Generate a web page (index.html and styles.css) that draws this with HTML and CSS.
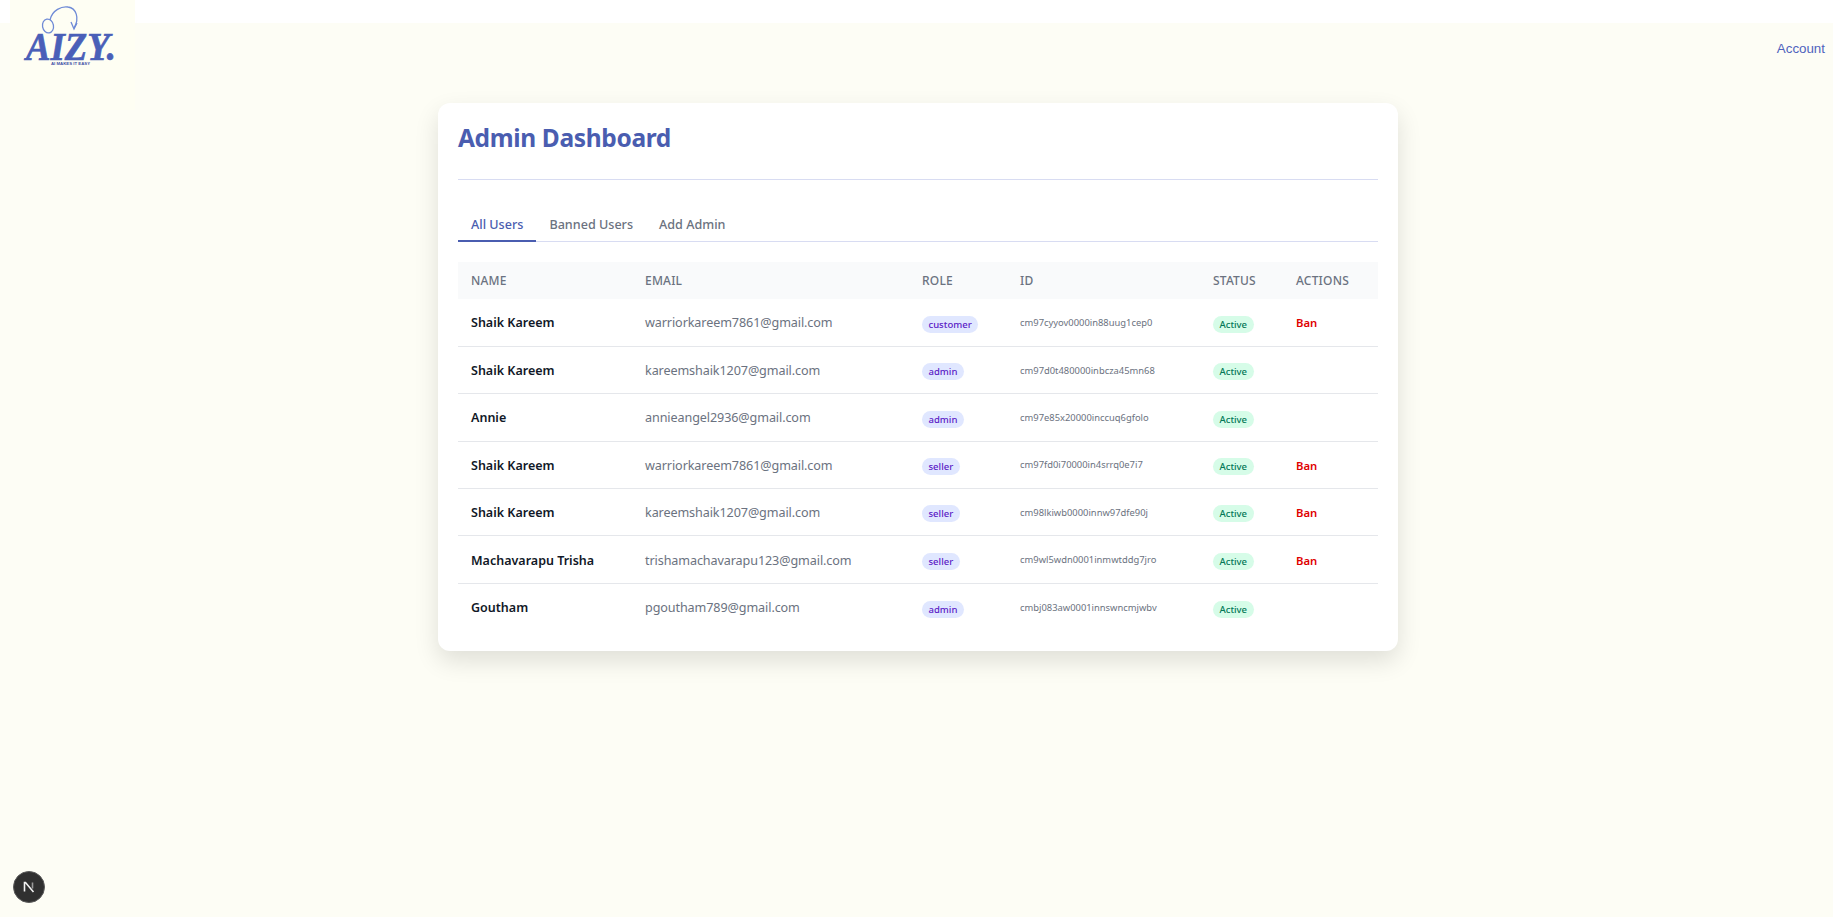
FILE: index.html
```html
<!DOCTYPE html>
<html lang="en">

<head>
    <meta charset="UTF-8">
    <meta name="viewport" content="width=device-width, initial-scale=1.0">
    <title>Admin Dashboard</title>
    <link rel="stylesheet" href="styles.css">
</head>

<body>
    <header class="site-header">
        <div class="logo-box">
            <svg class="logo" width="125" height="70" viewBox="0 0 125 70">
                <ellipse class="logo-loop" cx="38" cy="26" rx="5.5" ry="7" transform="rotate(-10 38 26)" />
                <path class="logo-loop" d="M40 20C42 10 52 6 58 7C66 8 70 18 64 28" />
                <path class="logo-loop" d="M61 22L64 29L67 23" />
                <text class="logo-word" x="16" y="60" textLength="90" lengthAdjust="spacingAndGlyphs">AIZY.</text>
                <text class="logo-tag" x="41" y="65" textLength="39" lengthAdjust="spacingAndGlyphs">AI MAKES IT EASY</text>
            </svg>
        </div>
        <a class="account" href="#">Account</a>
    </header>

    <main class="card">
        <h1>Admin Dashboard</h1>

        <nav class="tabs">
            <a class="tab active" href="#">All Users</a>
            <a class="tab" href="#">Banned Users</a>
            <a class="tab" href="#">Add Admin</a>
        </nav>

        <table class="users">
            <colgroup>
                <col class="col-name">
                <col class="col-email">
                <col class="col-role">
                <col class="col-id">
                <col class="col-status">
                <col class="col-actions">
            </colgroup>
            <thead>
                <tr>
                    <th>Name</th>
                    <th>Email</th>
                    <th>Role</th>
                    <th>ID</th>
                    <th>Status</th>
                    <th>Actions</th>
                </tr>
            </thead>
            <tbody>
                <tr>
                    <td class="name">Shaik Kareem</td>
                    <td class="email">warriorkareem7861@gmail.com</td>
                    <td><span class="pill role">customer</span></td>
                    <td class="uid">cm97cyyov0000in88uug1cep0</td>
                    <td><span class="pill status">Active</span></td>
                    <td><a class="ban" href="#">Ban</a></td>
                </tr>
                <tr>
                    <td class="name">Shaik Kareem</td>
                    <td class="email">kareemshaik1207@gmail.com</td>
                    <td><span class="pill role">admin</span></td>
                    <td class="uid">cm97d0t480000inbcza45mn68</td>
                    <td><span class="pill status">Active</span></td>
                    <td></td>
                </tr>
                <tr>
                    <td class="name">Annie</td>
                    <td class="email">annieangel2936@gmail.com</td>
                    <td><span class="pill role">admin</span></td>
                    <td class="uid">cm97e85x20000inccuq6gfolo</td>
                    <td><span class="pill status">Active</span></td>
                    <td></td>
                </tr>
                <tr>
                    <td class="name">Shaik Kareem</td>
                    <td class="email">warriorkareem7861@gmail.com</td>
                    <td><span class="pill role">seller</span></td>
                    <td class="uid">cm97fd0i70000in4srrq0e7i7</td>
                    <td><span class="pill status">Active</span></td>
                    <td><a class="ban" href="#">Ban</a></td>
                </tr>
                <tr>
                    <td class="name">Shaik Kareem</td>
                    <td class="email">kareemshaik1207@gmail.com</td>
                    <td><span class="pill role">seller</span></td>
                    <td class="uid">cm98lkiwb0000innw97dfe90j</td>
                    <td><span class="pill status">Active</span></td>
                    <td><a class="ban" href="#">Ban</a></td>
                </tr>
                <tr>
                    <td class="name">Machavarapu Trisha</td>
                    <td class="email">trishamachavarapu123@gmail.com</td>
                    <td><span class="pill role">seller</span></td>
                    <td class="uid">cm9wl5wdn0001inmwtddg7jro</td>
                    <td><span class="pill status">Active</span></td>
                    <td><a class="ban" href="#">Ban</a></td>
                </tr>
                <tr>
                    <td class="name">Goutham</td>
                    <td class="email">pgoutham789@gmail.com</td>
                    <td><span class="pill role">admin</span></td>
                    <td class="uid">cmbj083aw0001innswncmjwbv</td>
                    <td><span class="pill status">Active</span></td>
                    <td></td>
                </tr>
            </tbody>
        </table>
    </main>

    <button class="dev-badge" aria-label="Next.js dev tools">
        <svg width="16" height="16" viewBox="0 0 16 16">
            <path class="n-main" d="M3.5 12.5V3.5H4.5L12.5 13" />
            <path class="n-side" d="M11.5 3.5V9.5" />
        </svg>
    </button>
</body>

</html>
```

FILE: styles.css
```css
body {
    margin: 0;
    min-height: 917px;
    background-color: #fdfdf5;
    font-family: "Noto Sans", "Open Sans", Arial, sans-serif;
    color: #111827;
}

a {
    text-decoration: none;
}

.site-header {
    display: flex;
    justify-content: space-between;
    align-items: flex-start;
    height: 103px;
    padding: 0 8px 0 10px;
    background: linear-gradient(#fff 23px, transparent 23px);
}

.logo-box {
    width: 125px;
    height: 110px;
    background-color: #fefef3;
}

.logo {
    display: block;
}

.logo-loop {
    fill: none;
    stroke: #6f8bd6;
    stroke-width: 1.3;
}

.logo-word {
    fill: #4a5fb8;
    stroke: #4a5fb8;
    stroke-width: 0.7;
    font-family: "Liberation Serif", serif;
    font-size: 40px;
    font-weight: bold;
    font-style: italic;
}

.logo-tag {
    fill: #3d4fa6;
    font-family: "Liberation Sans", sans-serif;
    font-size: 3px;
    font-weight: bold;
}

.account {
    margin-top: 40px;
    color: #4f63bd;
    font-family: "Liberation Sans", Arial, sans-serif;
    font-size: 13.33px;
    line-height: 17px;
}

.card {
    box-sizing: border-box;
    width: 960px;
    height: 548px;
    margin: 0 0 0 438px;
    padding: 16px 20px 20px;
    background-color: #fff;
    border-radius: 12px;
    box-shadow: 0 10px 25px rgba(0, 0, 0, 0.12);
}

h1 {
    margin: 0 0 29px;
    padding-bottom: 22px;
    border-bottom: 1px solid #d8dcf2;
    color: #4a5db0;
    font-size: 24.5px;
    letter-spacing: -0.35px;
    line-height: 38px;
    font-weight: 700;
}

.tabs {
    display: flex;
    margin-bottom: 20px;
    border-bottom: 1px solid #d8dcf2;
}

.tab {
    margin-bottom: -1px;
    padding: 0 13px;
    color: #6b7280;
    font-size: 12.6px;
    line-height: 31px;
    font-weight: 500;
    border-bottom: 2px solid transparent;
}

.tab.active {
    color: #4a5db0;
    border-bottom-color: #4a5db0;
}

.users {
    width: 100%;
    table-layout: fixed;
    border-collapse: collapse;
}

.col-name { width: 174px; }
.col-email { width: 277px; }
.col-role { width: 98px; }
.col-id { width: 193px; }
.col-status { width: 83px; }
.col-actions { width: 95px; }

.users th {
    height: 37px;
    padding: 0 0 0 13px;
    background-color: #f9fafb;
    color: #6b7280;
    font-size: 12px;
    letter-spacing: 0.2px;
    font-weight: 500;
    text-align: left;
    text-transform: uppercase;
}

.users td {
    height: 47.4px;
    padding: 0 0 0 13px;
    border-bottom: 1px solid #e5e7eb;
    box-sizing: border-box;
}

.users tbody tr:last-child td {
    border-bottom: 0;
}

.users td.name,
.users td.email {
    padding-top: 1px;
}

.name {
    font-size: 12.5px;
    font-weight: 600;
}

.email {
    color: #6b7280;
    font-size: 12.6px;
    letter-spacing: -0.1px;
}

.uid {
    color: #6b7280;
    font-size: 9.4px;
}

.pill {
    display: inline-block;
    padding: 0 6.5px;
    border-radius: 9px;
    font-size: 9.5px;
    line-height: 17px;
    font-weight: 500;
    vertical-align: middle;
}

.role {
    background-color: #e0e7ff;
    color: #5b21c6;
}

.status {
    background-color: #d6fce8;
    color: #047857;
}

.ban {
    display: inline-block;
    margin-bottom: 4px;
    color: #e00000;
    font-size: 11.3px;
    font-weight: 600;
}

.dev-badge {
    position: fixed;
    left: 13px;
    bottom: 14px;
    display: flex;
    align-items: center;
    justify-content: center;
    width: 32px;
    height: 32px;
    padding: 0;
    background-color: #303030;
    border: 1px solid #5a5a5a;
    border-radius: 50%;
}

.dev-badge path {
    fill: none;
    stroke-width: 1.6;
}

.n-main {
    stroke: #f2f2f2;
}

.n-side {
    stroke: #9a9a9a;
}
```
